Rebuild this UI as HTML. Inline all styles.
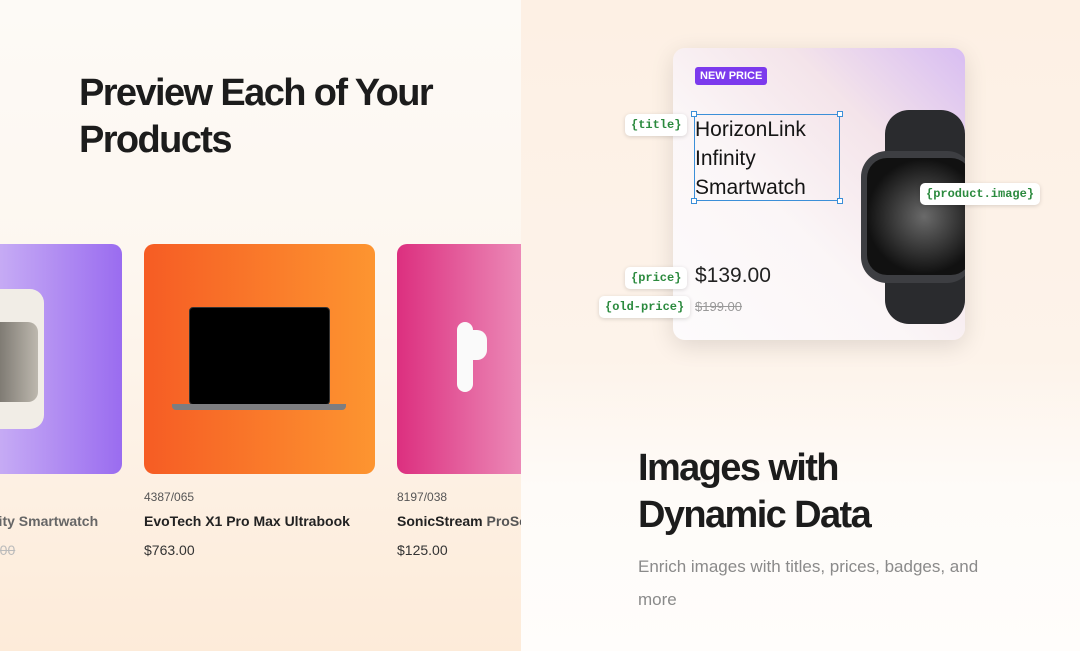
<!DOCTYPE html>
<html><head><meta charset="utf-8"><style>
*{margin:0;padding:0;box-sizing:border-box}
body{width:1080px;height:651px;overflow:hidden;font-family:"Liberation Sans",sans-serif;position:relative;background:#fdf8f2}
.left{position:absolute;left:0;top:0;width:521px;height:651px;background:linear-gradient(#fdfaf6 0%,#fdf7f0 40%,#fdebd9 100%);overflow:hidden}
.right{position:absolute;left:521px;top:0;width:559px;height:651px;background:linear-gradient(#fdf0e4 0%,#fdf3ea 55%,#fefbf8 75%,#fffdfb 100%);overflow:hidden}
h1{position:absolute;font-size:38px;font-weight:bold;color:#1c1c1c;letter-spacing:-1.6px;line-height:47px}
.card{position:absolute;top:244px;height:230px;border-radius:10px}
.code{position:absolute;font-size:12px;color:#555}
.tt{position:absolute;font-size:14px;font-weight:bold;color:#222}
.pr{position:absolute;font-size:14px;color:#333}
.tag{position:absolute;background:#fff;border-radius:5px;font-family:"Liberation Mono",monospace;font-size:12px;color:#2b8a3e;padding:4px 6px;box-shadow:0 1px 4px rgba(0,0,0,.15);font-weight:bold}
.h{position:absolute;width:6px;height:6px;background:#fff;border:1px solid #3b8fd8}
</style></head><body>
<div class="left">
<h1 style="left:79px;top:70px">Preview Each of Your<br>Products</h1>
<div class="card" style="left:-20px;width:142px;background:linear-gradient(90deg,#cdb5f5,#9a6cf0)">
 <div style="position:absolute;left:0;top:45px;width:64px;height:140px;background:#f1ede6;border-radius:14px"></div>
 <div style="position:absolute;left:0;top:78px;width:58px;height:80px;background:linear-gradient(90deg,#5f5b55,#bdb8ae);border-radius:10px"></div>
</div>
<div class="card" style="left:144px;width:231px;background:linear-gradient(90deg,#f65c24,#fd9530)">
 <div style="position:absolute;left:45px;top:63px;width:141px;height:98px;background:#000;border-radius:4px;border:1px solid #333"></div>
 <div style="position:absolute;left:28px;top:160px;width:174px;height:6px;background:#7d7d80;border-radius:0 0 4px 4px"></div>
</div>
<div class="card" style="left:397px;width:160px;background:linear-gradient(90deg,#dc2f7f,#f0a3c7)">
 <div style="position:absolute;left:60px;top:78px;width:16px;height:70px;background:#fafafa;border-radius:8px"></div>
 <div style="position:absolute;left:66px;top:86px;width:24px;height:30px;background:#fafafa;border-radius:10px"></div>
</div>
<div class="code" style="left:144px;top:490px">4387/065</div>
<div class="tt" style="left:144px;top:513px">EvoTech X1 Pro Max Ultrabook</div>
<div class="pr" style="left:144px;top:542px">$763.00</div>
<div class="code" style="left:397px;top:490px">8197/038</div>
<div class="tt" style="left:397px;top:513px;white-space:nowrap"><span>SonicStream</span> <span style="color:#555">ProSound</span></div>
<div class="pr" style="left:397px;top:542px">$125.00</div>
<div class="tt" style="left:-10px;top:513px;color:#666">nity Smartwatch</div>
<div class="pr" style="left:-12px;top:542px;color:#bbb;text-decoration:line-through">9.00</div>
</div>
<div class="right">
<div style="position:absolute;left:152px;top:48px;width:292px;height:292px;border-radius:12px;background:linear-gradient(225deg,#d8bdf2 0%,#f4e4ea 30%,#fbf6f7 60%,#fdfbfc 100%);box-shadow:0 6px 24px rgba(0,0,0,.12);overflow:hidden">
 <div style="position:absolute;left:22px;top:19px;background:#7c3aed;color:#fff;font-size:11px;font-weight:bold;padding:3px 5px;border-radius:3px">NEW PRICE</div>
 <div style="position:absolute;left:22px;top:67px;font-size:21px;line-height:29px;color:#151515">HorizonLink<br>Infinity<br>Smartwatch</div>
 <div style="position:absolute;left:22px;top:216px;font-size:21px;color:#222">$139.00</div>
 <div style="position:absolute;left:22px;top:251px;font-size:13px;color:#999;text-decoration:line-through">$199.00</div>
 <div style="position:absolute;left:212px;top:62px;width:80px;height:214px;background:#2a2b2e;border-radius:24px"></div>
 <div style="position:absolute;left:188px;top:103px;width:112px;height:132px;background:#3d3e42;border-radius:26px"></div>
 <div style="position:absolute;left:194px;top:110px;width:104px;height:117px;background:radial-gradient(circle at 55% 50%,#6a6a6a,#111 70%);border-radius:20px"></div>
</div>
<div style="position:absolute;left:173px;top:114px;width:146px;height:87px;border:1px solid #3b8fd8"></div>
<div class="h" style="left:170px;top:111px"></div><div class="h" style="left:316px;top:111px"></div>
<div class="h" style="left:170px;top:198px"></div><div class="h" style="left:316px;top:198px"></div>
<div class="tag" style="left:104px;top:114px">{title}</div>
<div class="tag" style="left:399px;top:183px">{product.image}</div>
<div class="tag" style="left:104px;top:267px">{price}</div>
<div class="tag" style="left:78px;top:296px">{old-price}</div>
<h1 style="left:117px;top:445px">Images with<br>Dynamic Data</h1>
<div style="position:absolute;left:117px;top:550px;width:380px;font-size:17px;line-height:33px;color:#8a8a8a">Enrich images with titles, prices, badges, and more</div>
</div>
</body></html>
